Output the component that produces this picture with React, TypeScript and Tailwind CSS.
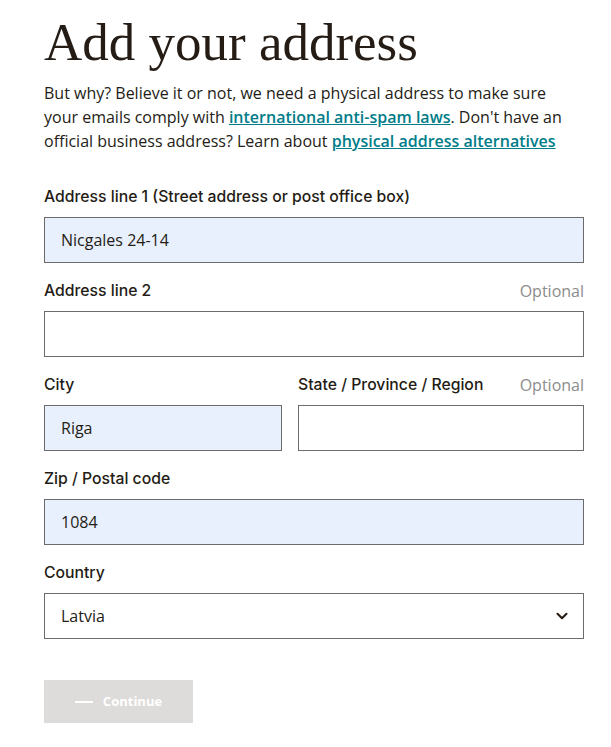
import { ChevronDown } from 'lucide-react';

const sans = { fontFamily: '"Open Sans", "Liberation Sans", sans-serif' };
const labelFont = { fontFamily: 'Inter, "Open Sans", sans-serif' };

function Label({ text, optional }: { text: string; optional?: boolean }) {
    return (
        <div className="flex justify-between items-center h-[20px] mb-[10px] leading-[20px]">
            <span className="font-medium text-[15.75px] text-[#241c15]" style={labelFont}>{text}</span>
            {optional && <span className="text-[16px] text-[#8c8c8c] font-normal">Optional</span>}
        </div>
    );
}

function Field({ value, filled }: { value?: string; filled?: boolean }) {
    return (
        <div
            className={`h-[46px] border border-[#6b6b6b] px-4 flex items-center text-[16px] text-[#241c15] ${filled ? 'bg-[#e8f0fe]' : 'bg-white'}`}
        >
            {value}
        </div>
    );
}

export default function App() {
    return (
        <div className="w-[611px] h-[747px] bg-white overflow-hidden" style={sans}>
            <div className="pl-[44px] pr-[27px]">
                <h1
                    className="text-[53px] leading-[60px] pt-[12px] text-[#241c15]"
                    style={{ fontFamily: '"Liberation Serif", serif' }}
                >
                    Add your address
                </h1>
                <p className="mt-[9px] text-[16px] leading-[24px] text-[#241c15]">
                    But why? Believe it or not, we need a physical address to make sure your emails comply with{' '}
                    <a href="#" className="text-[#007c89] font-semibold underline">international anti-spam laws</a>. Don't have an
                    official business address? Learn about{' '}
                    <a href="#" className="text-[#007c89] font-semibold underline">physical address alternatives</a>
                </p>

                <div className="mt-[34px] flex flex-col gap-[18px]">
                    <div>
                        <Label text="Address line 1 (Street address or post office box)" />
                        <Field value="Nicgales 24-14" filled />
                    </div>
                    <div>
                        <Label text="Address line 2" optional />
                        <Field />
                    </div>
                    <div className="flex gap-[16px]">
                        <div className="w-[238px]">
                            <Label text="City" />
                            <Field value="Riga" filled />
                        </div>
                        <div className="flex-1">
                            <Label text="State / Province / Region" optional />
                            <Field />
                        </div>
                    </div>
                    <div>
                        <Label text="Zip / Postal code" />
                        <Field value="1084" filled />
                    </div>
                    <div>
                        <Label text="Country" />
                        <div className="h-[46px] border border-[#6b6b6b] pl-4 pr-[12px] flex items-center justify-between text-[16px] text-[#241c15]">
                            <span>Latvia</span>
                            <ChevronDown size={18} strokeWidth={2.75} />
                        </div>
                    </div>
                </div>

                <button className="mt-[41px] w-[149px] h-[43px] bg-[#dddcda] flex items-center justify-center gap-[10px] text-white text-[13px] font-bold">
                    <span className="w-[18px] h-[2px] bg-white" />
                    Continue
                </button>
            </div>
        </div>
    );
}
